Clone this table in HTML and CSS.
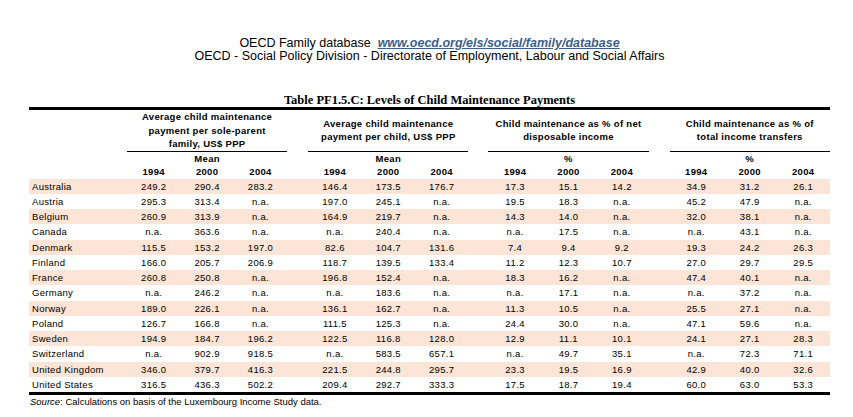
FILE: index.html
```html
<!DOCTYPE html>
<html>
<head>
    <link rel="stylesheet" href="styles.css">
</head>
<body>
    <div class="page">
        <div class="intro">
            <div>OECD Family database&nbsp; <a class="db-link" href="#">www.oecd.org/els/social/family/database</a></div>
            <div>OECD - Social Policy Division - Directorate of Employment, Labour and Social Affairs</div>
        </div>

        <div class="table-title">Table PF1.5.C: Levels of Child Maintenance Payments</div>

        <table class="data">
            <colgroup>
                <col class="c-label">
                <col class="c-num"><col class="c-num"><col class="c-num">
                <col class="c-gap">
                <col class="c-num"><col class="c-num"><col class="c-num">
                <col class="c-gap2">
                <col class="c-num"><col class="c-num"><col class="c-num">
                <col class="c-gap">
                <col class="c-num"><col class="c-num"><col class="c-num">
            </colgroup>
            <thead>
                <tr class="group-row">
                    <th></th>
                    <th colspan="3" class="group">Average child maintenance<br>payment per sole-parent<br>family, US$ PPP</th>
                    <th></th>
                    <th colspan="3" class="group">Average child maintenance<br>payment per child, US$ PPP</th>
                    <th></th>
                    <th colspan="3" class="group">Child maintenance as % of net<br>disposable income</th>
                    <th></th>
                    <th colspan="3" class="group">Child maintenance as % of<br>total income transfers</th>
                </tr>
                <tr class="sub-row">
                    <th></th>
                    <th></th><th>Mean</th><th></th>
                    <th></th>
                    <th></th><th>Mean</th><th></th>
                    <th></th>
                    <th></th><th>%</th><th></th>
                    <th></th>
                    <th></th><th>%</th><th></th>
                </tr>
                <tr class="sub-row">
                    <th></th>
                    <th>1994</th><th>2000</th><th>2004</th>
                    <th></th>
                    <th>1994</th><th>2000</th><th>2004</th>
                    <th></th>
                    <th>1994</th><th>2000</th><th>2004</th>
                    <th></th>
                    <th>1994</th><th>2000</th><th>2004</th>
                </tr>
            </thead>
            <tbody id="rows"></tbody>
        </table>

        <div class="source"><i>Source</i>: Calculations on basis of the Luxembourg Income Study data.</div>
    </div>

    <script>
        const rows = [
            ["Australia", "249.2", "290.4", "283.2", "146.4", "173.5", "176.7", "17.3", "15.1", "14.2", "34.9", "31.2", "26.1"],
            ["Austria", "295.3", "313.4", "n.a.", "197.0", "245.1", "n.a.", "19.5", "18.3", "n.a.", "45.2", "47.9", "n.a."],
            ["Belgium", "260.9", "313.9", "n.a.", "164.9", "219.7", "n.a.", "14.3", "14.0", "n.a.", "32.0", "38.1", "n.a."],
            ["Canada", "n.a.", "363.6", "n.a.", "n.a.", "240.4", "n.a.", "n.a.", "17.5", "n.a.", "n.a.", "43.1", "n.a."],
            ["Denmark", "115.5", "153.2", "197.0", "82.6", "104.7", "131.6", "7.4", "9.4", "9.2", "19.3", "24.2", "26.3"],
            ["Finland", "166.0", "205.7", "206.9", "118.7", "139.5", "133.4", "11.2", "12.3", "10.7", "27.0", "29.7", "29.5"],
            ["France", "260.8", "250.8", "n.a.", "196.8", "152.4", "n.a.", "18.3", "16.2", "n.a.", "47.4", "40.1", "n.a."],
            ["Germany", "n.a.", "246.2", "n.a.", "n.a.", "183.6", "n.a.", "n.a.", "17.1", "n.a.", "n.a.", "37.2", "n.a."],
            ["Norway", "189.0", "226.1", "n.a.", "136.1", "162.7", "n.a.", "11.3", "10.5", "n.a.", "25.5", "27.1", "n.a."],
            ["Poland", "126.7", "166.8", "n.a.", "111.5", "125.3", "n.a.", "24.4", "30.0", "n.a.", "47.1", "59.6", "n.a."],
            ["Sweden", "194.9", "184.7", "196.2", "122.5", "116.8", "128.0", "12.9", "11.1", "10.1", "24.1", "27.1", "28.3"],
            ["Switzerland", "n.a.", "902.9", "918.5", "n.a.", "583.5", "657.1", "n.a.", "49.7", "35.1", "n.a.", "72.3", "71.1"],
            ["United Kingdom", "346.0", "379.7", "416.3", "221.5", "244.8", "295.7", "23.3", "19.5", "16.9", "42.9", "40.0", "32.6"],
            ["United States", "316.5", "436.3", "502.2", "209.4", "292.7", "333.3", "17.5", "18.7", "19.4", "60.0", "63.0", "53.3"]
        ];

        const body = document.getElementById('rows');
        rows.forEach((r, index) => {
            const tr = document.createElement('tr');
            if (index % 2 === 0) tr.className = 'shaded';
            let html = `<td class="country">${r[0]}</td>`;
            for (let g = 0; g < 4; g++) {
                if (g > 0) html += '<td></td>';
                for (let k = 0; k < 3; k++) {
                    html += `<td>${r[1 + g * 3 + k]}</td>`;
                }
            }
            tr.innerHTML = html;
            body.appendChild(tr);
        });
    </script>
</body>
</html>
```

FILE: styles.css
```css
body {
    margin: 0;
    background: white;
    color: black;
    font-family: "Liberation Sans", Arial, sans-serif;
}

.page {
    width: 801px;
    margin-left: 29px;
    padding-top: 37px;
}

.intro {
    text-align: center;
    font-size: 12.5px;
    line-height: 13px;
}

.db-link {
    color: #3d5f8c;
    font-weight: bold;
    font-style: italic;
}

.table-title {
    margin-top: 30px;
    text-align: center;
    font-family: "Liberation Serif", "Times New Roman", serif;
    font-weight: bold;
    font-size: 12.5px;
    line-height: 14px;
    border-bottom: 3px solid black;
}

.data {
    width: 801px;
    border-collapse: collapse;
    table-layout: fixed;
    font-size: 9.5px;
    letter-spacing: 0.3px;
}

.c-label { width: 98px; }
.c-num { width: 53.4px; }
.c-gap { width: 21px; }
.c-gap2 { width: 20px; }

.data th,
.data td {
    padding: 0;
    text-align: center;
    white-space: nowrap;
}

.group-row th {
    height: 38px;
    line-height: 13.5px;
    vertical-align: middle;
}

.group-row th.group {
    border-bottom: 1px solid black;
}

.sub-row th {
    height: 13.5px;
    line-height: 13.5px;
}

.data td {
    height: 15.25px;
    line-height: 15px;
}

.data td.country {
    text-align: left;
    padding-left: 3px;
}

.data tr.shaded td {
    background: #fce4d6;
}

.data tbody tr:last-child td {
    border-bottom: 3px solid black;
}

.source {
    font-size: 9.5px;
    line-height: 14px;
    padding-left: 1px;
}
```
